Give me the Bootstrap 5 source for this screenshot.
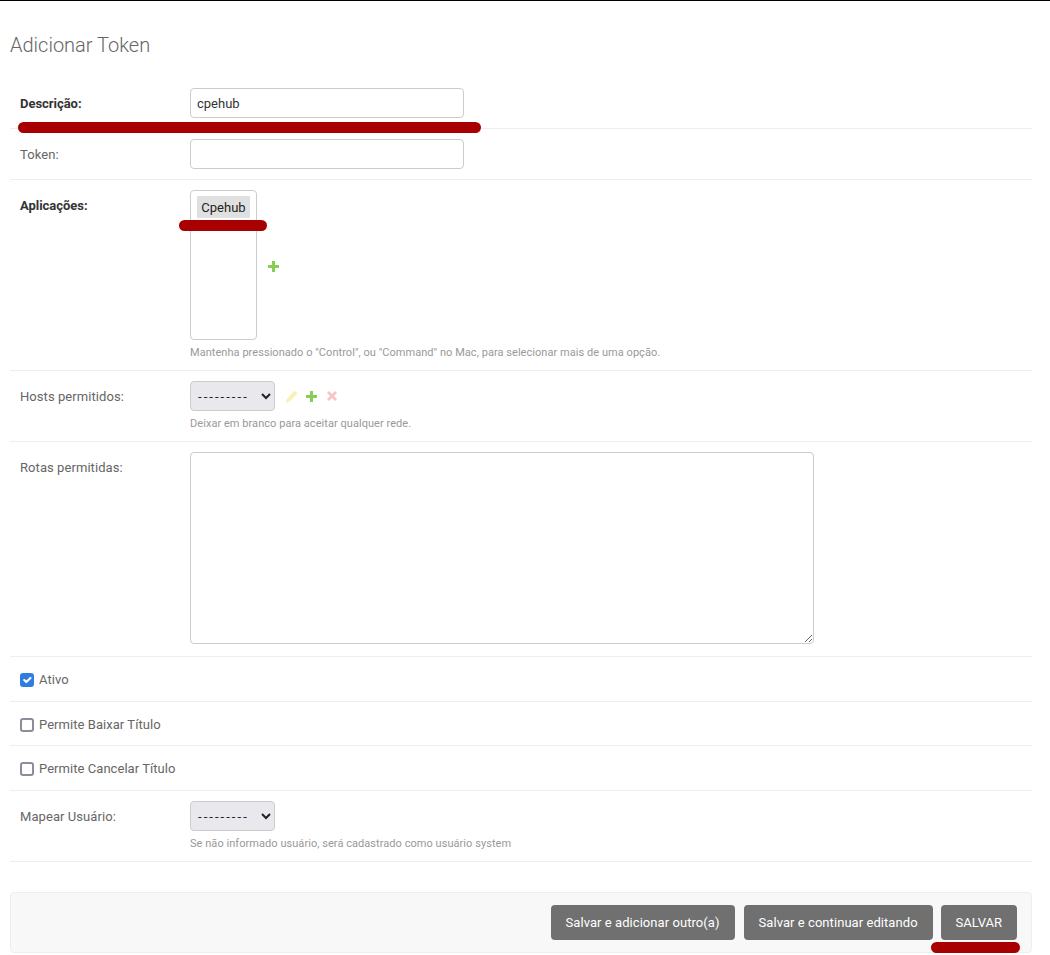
<!DOCTYPE html>
<html lang="pt-BR">
<head>
<meta charset="utf-8">
<title>Adicionar Token</title>
<link href="https://cdn.jsdelivr.net/npm/bootstrap@5.3.0/dist/css/bootstrap.min.css" rel="stylesheet">
<style>
html,body{height:955px;overflow:hidden}
body{font-family:Roboto,"Liberation Sans",sans-serif;font-size:13px;color:#666;background:#fff;border-top:1px solid #000;position:relative}
.page-wrap{width:1022px;margin-left:10px}
.page-title{font-weight:300;font-size:20px;line-height:24px;color:#666;margin:32px 0 21px 0}
.form-line{border-bottom:1px solid #eee;padding:10px}
.line-main{display:flex;align-items:flex-start}
.field-label{width:170px;flex:none;padding-top:8px;line-height:16px;font-size:13px;color:#666;margin:0;letter-spacing:.07px}
.field-label.required{font-weight:700;color:#333;letter-spacing:-.03px}
.tinput{width:274px;height:30px;padding:5px 6px;font-size:13px;line-height:18px;border:1px solid #ccc;border-radius:4px;color:#333}
.tselect-multi{width:67px;height:150px;border:1px solid #ccc;border-radius:4px;padding:5px 6px;font-size:13px;line-height:17px;color:#222;overflow:hidden;background:#fff}
.tselect-multi span{display:block;background:#e0e0e0;padding:3px 4px 1px;height:22px;text-align:center}
.tselect{width:85px;height:30px;padding:0 0 0 3px;font-size:13px;letter-spacing:2.05px;color:#222;background-color:#e9e9ed;background-image:none;border:1px solid #ccc;border-radius:4px;appearance:auto;-webkit-appearance:auto}
.ttextarea{display:block;width:624px;height:192px;padding:5px 6px;font-size:13px;border:1px solid #ccc;border-radius:4px;resize:both;margin-bottom:2px}
.help-note{font-size:11px;line-height:14px;color:#999;margin:6px 0 0 170px;letter-spacing:.05px}
.rel-links{display:flex;align-items:center;gap:8px;margin-left:10px;height:30px}
.rel-links svg{display:block}
.rel-links .cross-icon{margin-left:2px}
.add-only{margin-left:11px;margin-top:61px}
.check-line{display:flex;align-items:center;height:100%}
.check-line .form-check-input{width:14px;height:14px;margin:0 5px 0 0;border:2px solid #8c8c9b;border-radius:3px;flex:none}
.check-line .form-check-input:checked{background-color:#2f7de1;border-color:#2f7de1;background-origin:border-box;background-size:100% 100%;background-repeat:no-repeat;background-position:center}
.check-line label{font-size:13px;line-height:16px;color:#666;letter-spacing:.05px}
.check-row{padding:2px 10px 0}
.submit-bar{margin-top:30px;height:61px;background:#f8f8f8;border:1px solid #eee;border-radius:4px;display:flex;justify-content:flex-end;align-items:flex-start;padding:12px 14px 0 0}
.save-btn{height:35px;padding:0 15px;font-size:13px;line-height:33px;background:#707070;border:0;color:#fff;border-radius:4px;margin-left:9px;letter-spacing:.06px}
.save-btn.is-default{margin-left:8px;letter-spacing:0}
.ink-mark{position:absolute;background:#a80000;border-radius:6px;height:11px}
</style>
</head>
<body>
<div class="page-wrap">
  <h1 class="page-title">Adicionar Token</h1>
  <form>
    <div class="form-line">
      <div class="line-main"><label class="field-label required">Descrição:</label><input class="form-control tinput" value="cpehub"></div>
    </div>
    <div class="form-line">
      <div class="line-main"><label class="field-label">Token:</label><input class="form-control tinput"></div>
    </div>
    <div class="form-line">
      <div class="line-main"><label class="field-label required">Aplicações:</label>
        <div class="tselect-multi"><span>Cpehub</span></div>
        <div class="rel-links add-only">
          <svg width="11" height="11" viewBox="0 0 11 11"><path d="M4 0h3v4h4v3H7v4H4V7H0V4h4z" fill="#86cf55"/></svg>
        </div>
      </div>
      <p class="help-note">Mantenha pressionado o "Control", ou "Command" no Mac, para selecionar mais de uma opção.</p>
    </div>
    <div class="form-line">
      <div class="line-main"><label class="field-label">Hosts permitidos:</label>
        <select class="form-select tselect"><option>---------</option></select>
        <div class="rel-links">
          <svg width="13" height="13" viewBox="0 0 13 13"><path d="M9.400.4l3.200 3.200-8 8-3.900 1.200 1.200-3.900z" fill="#fdeeb8"/></svg>
          <svg width="11" height="11" viewBox="0 0 11 11"><path d="M4 0h3v4h4v3H7v4H4V7H0V4h4z" fill="#86cf55"/></svg>
          <svg class="cross-icon" width="10" height="10" viewBox="0 0 10 10"><path d="M2 0l3 3 3-3 2 2-3 3 3 3-2 2-3-3-3 3-2-2 3-3-3-3z" fill="#f6c6c6"/></svg>
        </div>
      </div>
      <p class="help-note">Deixar em branco para aceitar qualquer rede.</p>
    </div>
    <div class="form-line">
      <div class="line-main"><label class="field-label">Rotas permitidas:</label><textarea class="form-control ttextarea"></textarea></div>
    </div>
    <div class="form-line check-row" style="height:45px">
      <div class="check-line"><input class="form-check-input" type="checkbox" id="c1" checked><label for="c1">Ativo</label></div>
    </div>
    <div class="form-line check-row" style="height:44px">
      <div class="check-line"><input class="form-check-input" type="checkbox" id="c2"><label for="c2">Permite Baixar Título</label></div>
    </div>
    <div class="form-line check-row" style="height:45px">
      <div class="check-line"><input class="form-check-input" type="checkbox" id="c3"><label for="c3">Permite Cancelar Título</label></div>
    </div>
    <div class="form-line">
      <div class="line-main"><label class="field-label">Mapear Usuário:</label><select class="form-select tselect"><option>---------</option></select></div>
      <p class="help-note">Se não informado usuário, será cadastrado como usuário system</p>
    </div>
    <div class="submit-bar">
      <button type="button" class="btn save-btn">Salvar e adicionar outro(a)</button>
      <button type="button" class="btn save-btn">Salvar e continuar editando</button>
      <button type="button" class="btn save-btn is-default">SALVAR</button>
    </div>
  </form>
</div>
<div class="ink-mark" style="left:18px;top:121px;width:463px"></div>
<div class="ink-mark" style="left:179px;top:219px;width:88px"></div>
<div class="ink-mark" style="left:931px;top:941px;width:89px"></div>
</body>
</html>
